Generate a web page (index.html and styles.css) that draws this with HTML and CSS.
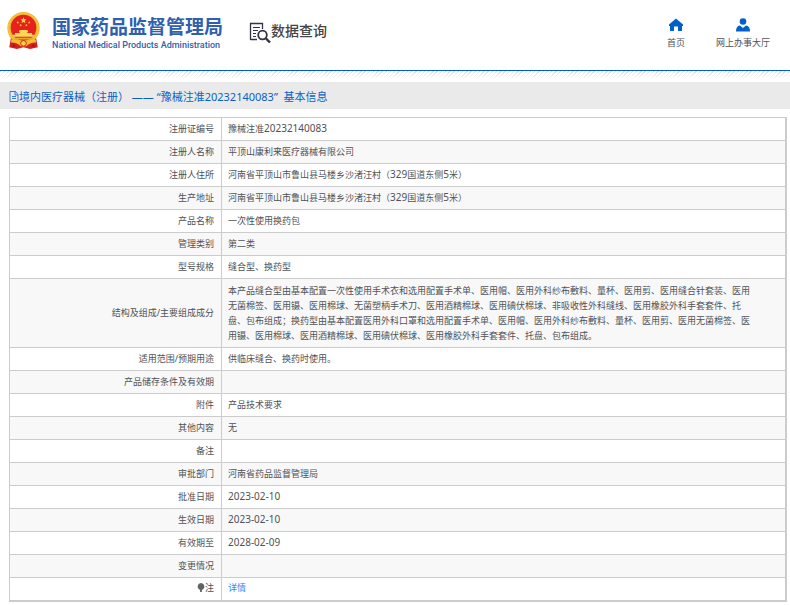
FILE: index.html
```html
<!DOCTYPE html>
<html lang="zh-CN">
<head>
<meta charset="utf-8">
<meta name="viewport" content="width=device-width, initial-scale=1">
<title>国家药品监督管理局 数据查询</title>
<link rel="stylesheet" href="styles.css">
</head>
<body>
<header class="header">
  <div class="brand">
    <svg class="emblem" viewBox="0 0 36 40" aria-hidden="true">
      <path d="M5 26 L3 37 L11 39 L18 37 L25 39 L33 37 L31 26Z" fill="#d71f1b"/>
      <circle cx="18" cy="17" r="17" fill="#f0b62c"/>
      <circle cx="18" cy="17" r="15.5" fill="none" stroke="#f9d65a" stroke-width="1" stroke-dasharray="2 1"/>
      <circle cx="18" cy="16.500" r="13.500" fill="#e5231c"/>
      <path d="M18 5.500l.9 2.100 2.300.2-1.700 1.500.5 2.300-2-1.200-2 1.200.5-2.300-1.700-1.500 2.300-.2z" fill="#fbd94b"/>
      <g fill="#f5b83a"><circle cx="12" cy="11" r="1"/><circle cx="24" cy="11" r="1"/><circle cx="15" cy="14" r="1"/><circle cx="21" cy="14" r="1"/></g>
      <path d="M14 19h8l1 2h-1v1h5v2h2v2H7v-2h2v-2h5v-1h-1z" fill="#fbd458"/>
      <path d="M8 27h20v2H8z" fill="#e9a72b"/>
      <path d="M5 29q8 1 13 5 5-4 13-5v3q-7 0-10 4h-6q-3-4-10-4z" fill="#f3bd35"/>
      <circle cx="18" cy="33" r="3" fill="#f8cf4c" stroke="#d71f1b"/>
      <path d="M7 33l-1 4 4-1zM29 33l1 4-4-1z" fill="#b81318"/>
    </svg>
    <div class="brand-text">
      <h1 class="brand-name">国家药品监督管理局</h1>
      <p class="brand-en">National Medical Products Administration</p>
    </div>
  </div>
  <div class="section">
    <svg class="section-icon" viewBox="0 0 22 21" fill="none" stroke="#35334a" aria-hidden="true">
      <path d="M8 17.500H1.500M1.500 18V1.500h12V7" stroke-width="1.300"/>
      <path d="M4 5.500h7M4 8.500h5M4 11.500h3M4 14.500h3" stroke-width="1.200"/>
      <circle cx="13.500" cy="13" r="4.300" stroke-width="1.800"/>
      <path d="M16.500 16l4.500 4.500" stroke-width="2.400"/>
    </svg>
    <h2 class="section-name">数据查询</h2>
  </div>
  <nav class="nav">
    <a class="nav-link" href="#">
      <svg class="nav-icon" viewBox="0 0 14 14" fill="#0060c8" aria-hidden="true"><path d="M7 .5L0 6.500V8h1v5h4V8.500h4V13h4V8h1V6.500z"/></svg>
      <span>首页</span>
    </a>
    <a class="nav-link" href="#">
      <svg class="nav-icon" viewBox="0 0 14 14" fill="#0060c8" aria-hidden="true"><circle cx="7" cy="3.500" r="3.300"/><path d="M0 13.500q0-5.500 4-6l3 2.500 3-2.500q4 .5 4 6z"/></svg>
      <span>网上办事大厅</span>
    </a>
  </nav>
</header>
<div class="hatch"></div>
<main>
  <h3 class="title">
    <svg class="title-icon" viewBox="0 0 10 11" fill="none" stroke="#0a5fc4" aria-hidden="true"><path d="M1 .5h5.500l2.500 3v7H1zM6 .5V4h3M3 5.500h4M3 7.500h4" stroke-width=".8"/></svg>
    <span>境内医疗器械（注册） ——&nbsp;“豫械注准20232140083”&nbsp; 基本信息</span>
  </h3>
  <table class="info">
    <tbody>
      <tr><th scope="row">注册证编号</th><td>豫械注准<span class="num">20232140083</span></td></tr>
      <tr><th scope="row">注册人名称</th><td>平顶山康利来医疗器械有限公司</td></tr>
      <tr><th scope="row">注册人住所</th><td>河南省平顶山市鲁山县马楼乡沙渚汪村（<span class="num">329</span>国道东侧<span class="num">5</span>米）</td></tr>
      <tr><th scope="row">生产地址</th><td>河南省平顶山市鲁山县马楼乡沙渚汪村（<span class="num">329</span>国道东侧<span class="num">5</span>米）</td></tr>
      <tr><th scope="row">产品名称</th><td>一次性使用换药包</td></tr>
      <tr><th scope="row">管理类别</th><td>第二类</td></tr>
      <tr><th scope="row">型号规格</th><td>缝合型、换药型</td></tr>
      <tr class="long"><th scope="row">结构及组成/主要组成成分</th><td>本产品缝合型由基本配置一次性使用手术衣和选用配置手术单、医用帽、医用外科纱布敷料、量杯、医用剪、医用缝合针套装、医用无菌棉签、医用镊、医用棉球、无菌塑柄手术刀、医用酒精棉球、医用碘伏棉球、非吸收性外科缝线、医用橡胶外科手套套件、托盘、包布组成；换药型由基本配置医用外科口罩和选用配置手术单、医用帽、医用外科纱布敷料、量杯、医用剪、医用无菌棉签、医用镊、医用棉球、医用酒精棉球、医用碘伏棉球、医用橡胶外科手套套件、托盘、包布组成。</td></tr>
      <tr><th scope="row">适用范围/预期用途</th><td>供临床缝合、换药时使用。</td></tr>
      <tr><th scope="row">产品储存条件及有效期</th><td></td></tr>
      <tr><th scope="row">附件</th><td>产品技术要求</td></tr>
      <tr><th scope="row">其他内容</th><td>无</td></tr>
      <tr><th scope="row">备注</th><td></td></tr>
      <tr><th scope="row">审批部门</th><td>河南省药品监督管理局</td></tr>
      <tr><th scope="row">批准日期</th><td><span class="num">2023-02-10</span></td></tr>
      <tr><th scope="row">生效日期</th><td><span class="num">2023-02-10</span></td></tr>
      <tr><th scope="row">有效期至</th><td><span class="num">2028-02-09</span></td></tr>
      <tr><th scope="row">变更情况</th><td></td></tr>
      <tr><th scope="row"><svg class="note-icon" viewBox="0 0 8 10" fill="#606266" aria-hidden="true"><path d="M4 0a3.800 3.800 0 0 1 2 7L5 8v2H3V8L2 7a3.800 3.800 0 0 1 2-7z"/></svg>注</th><td><a class="detail" href="#">详情</a></td></tr>
    </tbody>
  </table>
</main>
</body>
</html>
```
FILE: styles.css
```css
* {
  box-sizing: border-box;
}

body {
  margin: 0;
  background: #fff;
  color: #505256;
  font-family: "Noto Sans", "Noto Sans CJK SC", sans-serif;
  font-size: 9px;
  line-height: 15px;
}

h1, h2, h3, p {
  margin: 0;
}

a {
  color: inherit;
  text-decoration: none;
}

.header {
  display: flex;
  align-items: flex-start;
  height: 71px;
  padding: 12px 20px 0 5px;
  border-bottom: 1px solid #0060c0;
}

.brand {
  display: flex;
  gap: 10px;
}

.emblem {
  width: 37px;
  height: 38px;
}

.brand-text {
  color: #2f5fae;
  white-space: nowrap;
}

.brand-name {
  padding-top: 4px;
  font-size: 19px;
  line-height: 22px;
}

.brand-en {
  font-family: Roboto, sans-serif;
  font-size: 9px;
  font-weight: 500;
  line-height: 14px;
}

.section {
  display: flex;
  padding: 10px 0 0 26px;
}

.section-icon {
  width: 22px;
  height: 21px;
}

.section-name {
  color: #444;
  font-size: 14px;
  font-weight: 500;
  line-height: 18px;
}

.nav {
  display: flex;
  gap: 31px;
  margin-left: auto;
  padding-top: 6px;
}

.nav-link {
  display: flex;
  flex-direction: column;
  align-items: center;
  gap: 3px;
}

.nav-icon {
  width: 14px;
  height: 14px;
}

.hatch {
  height: 11px;
  background: linear-gradient(#fff0, #fff 8px), repeating-linear-gradient(135deg, #ddd 0 1px, #fff 1px 3px);
}

.title {
  display: flex;
  align-items: center;
  height: 27px;
  padding: 1px 9px 0;
  background: #eaeaea;
  color: #0a5fc4;
  font-size: 11px;
  font-weight: 400;
}

.title-icon {
  width: 10px;
  height: 11px;
}

.info {
  width: calc(100% - 12px);
  margin: 8px 3px 3px 9px;
  border: 1px solid #ccc;
  border-right-width: 2px;
  border-bottom-width: 2px;
  border-collapse: collapse;
}

.info tr:nth-child(even) {
  background: #f8f8f8;
}

.info th,
.info td {
  height: 23px;
  padding: 2px 6px 4px;
  border: 1px solid #ccc;
  font-weight: 400;
}

.info th {
  width: 212px;
  padding-right: 7px;
  text-align: right;
}

.info td {
  padding-right: 30px;
  text-align: left;
}

.info .long td {
  padding-top: 4px;
}

.num {
  font-size: 10px;
}

.note-icon {
  width: 8px;
  height: 9px;
  vertical-align: -1px;
}

.detail {
  color: #1f8cff;
}
```
